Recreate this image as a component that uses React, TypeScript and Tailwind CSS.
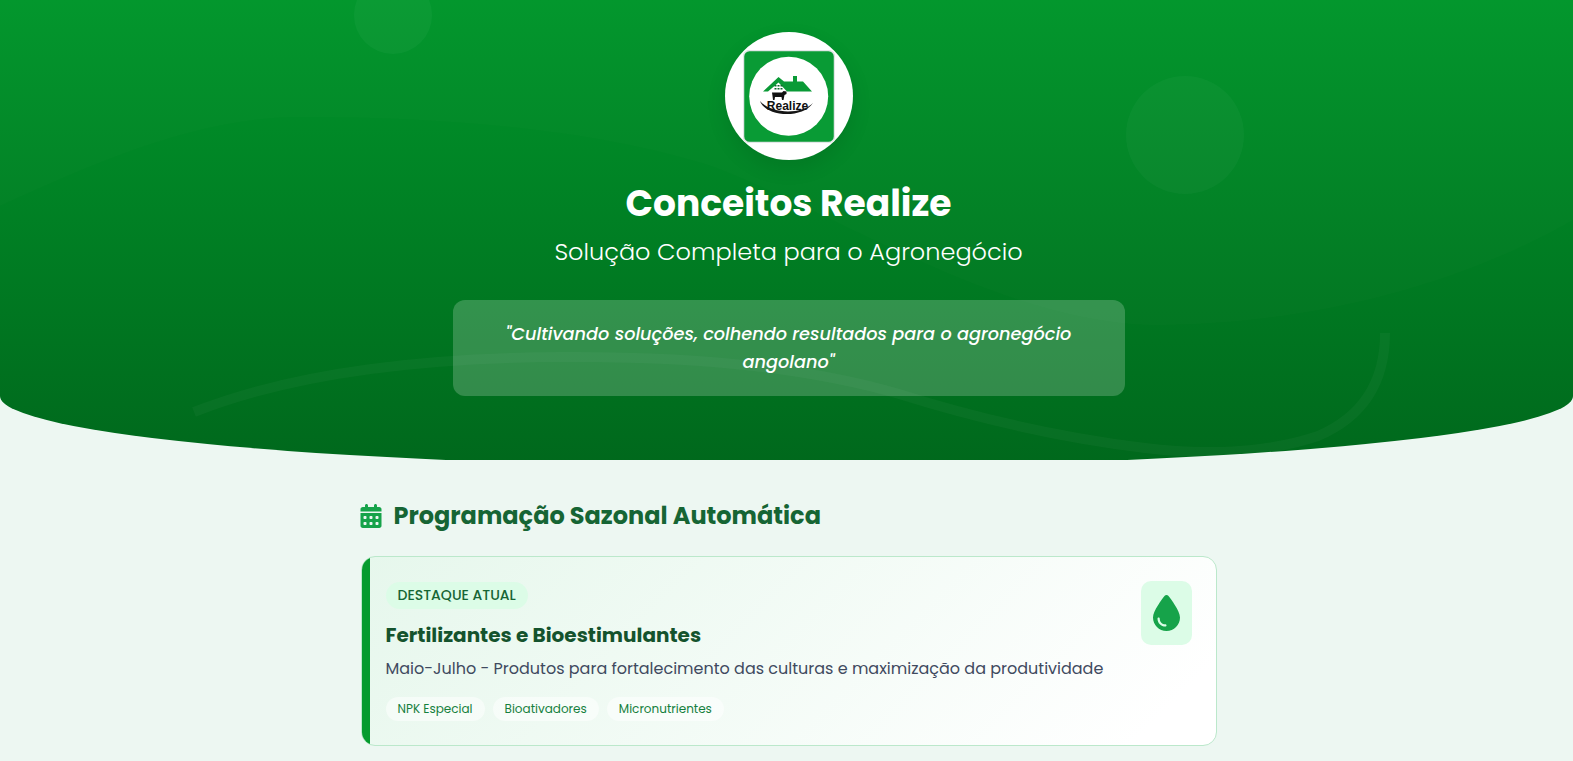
const sans = "font-['Poppins','Inter','Liberation_Sans',sans-serif]";

function Logo() {
  return (
    <svg viewBox="0 0 92 93" className="w-[92px] h-[93px]">
      <rect x="0.5" y="0.5" width="91" height="92" rx="6" fill="#099b35" stroke="#e3e6e8" strokeWidth="1.5" />
      <circle cx="45.7" cy="46.3" r="39.5" fill="#fff" />
      <path d="M20 41.5 L35.5 27 L41 31.5 L50 31.5 L50 26 L54 26 L54 31.5 L60 31.5 L69 41.5 L44 41.5 L35.5 32.5 L25 41.5 Z" fill="#0a9a36" />
      <path d="M31.5 35h2v1.5h-2zM34.5 35h2v1.5h-2zM37.5 35h2v1.5h-2zM31.5 38h2v1.5h-2zM34.5 38h2v1.5h-2zM37.5 38h2v1.5h-2z" fill="#0d6b2c" />
      <path d="M29 42.5 L39 42.5 L40.5 41 L43.5 41.5 L43.5 44 L41.5 45 L40.5 50 L39 50 L38.5 47 L32 47 L31.5 50 L30 50 L29.5 46 Z" fill="#111" />
      <text x="44.5" y="59.5" textAnchor="middle" fontSize="12" fontWeight="700" fill="#111" fontFamily="Liberation Sans, sans-serif">Realize</text>
      <path d="M17 51 C22 66 58 70 70 53 C58 65 28 64 17 51 Z" fill="#151515" />
    </svg>
  );
}

export default function App() {
  return (
    <div className={`min-h-[761px] overflow-hidden bg-[#edf7f2] ${sans}`}>
      <div className="h-[460px] overflow-hidden">
        <header className="relative h-[467px] overflow-hidden rounded-b-[50%_71px] bg-gradient-to-b from-[#00962b] to-[#00681c] flex flex-col items-center pl-1 pt-8">
          <div className="absolute left-[354px] top-[-24px] h-[78px] w-[78px] rounded-full bg-white/[0.035]" />
          <div className="absolute left-[1126px] top-[76px] h-[118px] w-[118px] rounded-full bg-white/[0.03]" />
          <svg className="absolute inset-0 h-full w-full" viewBox="0 0 1573 467" fill="none">
            <path d="M0 206 C100 160 200 117 300 117 C450 117 600 130 714 167 C850 220 1000 320 1150 325 C1300 325 1450 290 1573 220 L1573 0 L0 0 Z" fill="#fff" fillOpacity="0.01" />
            <path d="M194 412 C280 378 400 358 560 357 C680 356 800 365 899 394 C950 410 1040 435 1145 448 C1200 455 1265 454 1318 436 C1360 418 1385 385 1385 333" stroke="#fff" strokeOpacity="0.03" strokeWidth="10" />
          </svg>
          <div className="relative h-[128px] w-[128px] rounded-full bg-white flex items-center justify-center shadow-[0_8px_20px_rgba(0,0,0,0.1)]">
            <Logo />
          </div>
          <h1 className="relative mt-[21px] text-[36px] font-bold leading-[45px] text-white">Conceitos Realize</h1>
          <p className="relative mt-[9px] text-[24px] font-light leading-[34px] text-white">Solução Completa para o Agronegócio</p>
          <div className="relative mt-[31px] w-[672px] rounded-xl bg-white/20 px-12 py-5 text-center text-[17.72px] font-medium italic leading-[28.16px] text-white">
            "Cultivando soluções, colhendo resultados para o agronegócio angolano"
          </div>
        </header>
      </div>
      <div className="pl-1">
        <main className="mx-auto w-[856px] pt-[38px]">
          <div className="flex items-center gap-3">
            <svg viewBox="0 0 448 512" className="-ml-px h-[24px] w-[22px] fill-[#16a34a]">
              <path d="M128 0c17.7 0 32 14.3 32 32V64H288V32c0-17.7 14.3-32 32-32s32 14.3 32 32V64h48c26.5 0 48 21.5 48 48v48H0V112C0 85.5 21.5 64 48 64H96V32c0-17.7 14.3-32 32-32zM0 192H448V464c0 26.5-21.5 48-48 48H48c-26.5 0-48-21.5-48-48V192zm64 80v32c0 8.8 7.2 16 16 16h32c8.8 0 16-7.2 16-16V272c0-8.8-7.2-16-16-16H80c-8.8 0-16 7.2-16 16zm128 0v32c0 8.8 7.2 16 16 16h32c8.8 0 16-7.2 16-16V272c0-8.8-7.2-16-16-16H208c-8.8 0-16 7.2-16 16zm144-16c-8.8 0-16 7.2-16 16v32c0 8.8 7.2 16 16 16h32c8.8 0 16-7.2 16-16V272c0-8.8-7.2-16-16-16H336zM64 400v32c0 8.8 7.2 16 16 16h32c8.8 0 16-7.2 16-16V400c0-8.8-7.2-16-16-16H80c-8.8 0-16 7.2-16 16zm144-16c-8.8 0-16 7.2-16 16v32c0 8.8 7.2 16 16 16h32c8.8 0 16-7.2 16-16V400c0-8.8-7.2-16-16-16H208zm112 16v32c0 8.8 7.2 16 16 16h32c8.8 0 16-7.2 16-16V400c0-8.8-7.2-16-16-16H336c-8.8 0-16 7.2-16 16z" />
            </svg>
            <h2 className="text-[24px] font-bold leading-[36px] text-[#166534]">Programação Sazonal Automática</h2>
          </div>
          <section className="relative mt-[22px] flex h-[190px] justify-between overflow-hidden rounded-[14px] border border-[#bbe8cb] bg-[linear-gradient(135deg,#e6f7ec_0%,#ffffff_92%)] pl-6 pr-6 pt-6">
            <div className="absolute inset-y-0 left-0 w-2 bg-[#059b2e]" />
            <div className="relative pt-px">
              <span className="inline-block rounded-[14px] bg-[#dcfce7] px-3 py-[3px] text-[14px] font-medium leading-[21px] text-[#166534]">DESTAQUE ATUAL</span>
              <h3 className="mt-[11px] text-[20px] font-bold leading-[30px] text-[#14532d]">Fertilizantes e Bioestimulantes</h3>
              <p className="mt-[7px] text-[16px] leading-[24px] text-[#3f4a5f]">Maio-Julho - Produtos para fortalecimento das culturas e maximização da produtividade</p>
              <div className="mt-[16px] flex gap-2">
                {["NPK Especial", "Bioativadores", "Micronutrientes"].map((t) => (
                  <span key={t} className="rounded-xl bg-white/50 px-3 py-[3px] text-[12px] leading-[18px] text-[#15803d]">{t}</span>
                ))}
              </div>
            </div>
            <div className="flex h-[64px] w-[51px] items-center justify-center rounded-[10px] bg-[#dcfce7]">
              <svg viewBox="0 0 384 512" className="h-[36px] w-[27px] fill-[#16a34a]">
                <path d="M192 512C86 512 0 426 0 320C0 228.8 130.2 57.7 166.6 11.7C172.6 4.2 181.5 0 191.1 0h1.8c9.6 0 18.5 4.2 24.5 11.7C253.8 57.7 384 228.8 384 320c0 106-86 192-192 192zM96 336c0-8.8-7.2-16-16-16s-16 7.2-16 16c0 61.9 50.1 112 112 112c8.8 0 16-7.2 16-16s-7.2-16-16-16c-44.2 0-80-35.8-80-80z" />
              </svg>
            </div>
          </section>
        </main>
      </div>
    </div>
  );
}
